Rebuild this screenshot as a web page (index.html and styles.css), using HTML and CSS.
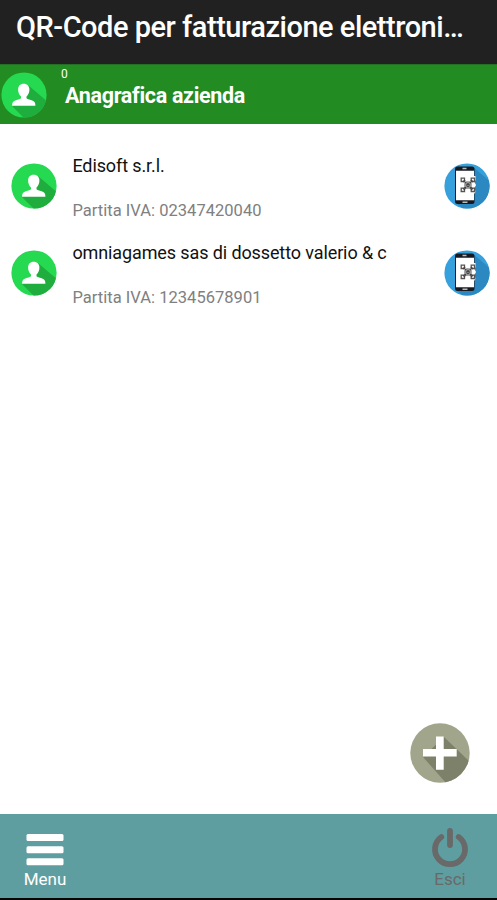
FILE: index.html
```
<!DOCTYPE html>
<html lang="it">
<head>
<meta charset="utf-8">
<title>QR-Code per fatturazione elettronica</title>
<link rel="stylesheet" href="styles.css">
</head>
<body>
<svg class="defs" width="0" height="0" aria-hidden="true">
  <defs>
    <clipPath id="disc"><circle cx="23" cy="23" r="22.6"/></clipPath>
    <symbol id="person" viewBox="0 0 46 46">
      <circle cx="23" cy="23" r="22.6" fill="#25d950"/>
      <path clip-path="url(#disc)" fill="#1fae3e" d="M27 13 L48 31 V48 H25 L11 34 L22 28Z"/>
      <path fill="#fff" d="M22.700 11.800c-3.600 0-5.600 2.300-5.600 5.700 0 3.200 1.200 5.500 2.900 6.900v1.900c-1 1.100-3.800 1.500-6.300 2.500-1.900.8-2.600 2.100-2.600 4.900h23.300c0-2.800-.7-4.100-2.600-4.900-2.500-1-5.300-1.400-6.300-2.500v-1.900c1.700-1.400 2.900-3.700 2.900-6.900 0-3.400-2.100-5.700-5.700-5.700z"/>
    </symbol>
    <symbol id="phone" viewBox="0 0 46 46">
      <circle cx="23" cy="23" r="22.6" fill="#35a0dc"/>
      <path clip-path="url(#disc)" fill="#2c88c0" d="M29 4 L48 20 V48 H22 L12 40Z"/>
      <rect x="11" y="3.500" width="19.500" height="37.500" rx="2.500" fill="#161a20"/>
      <path fill="#fff" d="M12 7.800H30V13H31.500V17L30.500 19L32 22L30.500 25L31.500 29L30 31V37.200H12Z"/>
      <path stroke="#bbb" stroke-width="1.500" d="M18.500 5.500h4M18.500 39.200h5"/>
      <g fill="none" stroke="#555">
        <path stroke-width="1.300" d="M17.200 15.200h3.300v3.300h-3.300zM27.200 15.200h3.300v3.300h-3.300zM17.200 25.200h3.300v3.300h-3.300zM27.200 25.200h3.300v3.300h-3.300z"/>
        <path stroke="#444" stroke-width="2.800" stroke-dasharray="1.600 .7" d="M19.500 17.500l9 9M28.500 17.500l-9 9"/>
        <path stroke="#888" stroke-width="1.200" d="M24 18.600l3.400 3.400-3.400 3.400-3.400-3.400z"/>
      </g>
    </symbol>
  </defs>
</svg>
<div class="app">
  <header class="titlebar"><h1>QR-Code per fatturazione elettroni…</h1></header>
  <section class="section-head">
    <svg class="icon"><use href="#person"/></svg>
    <div class="section-text">
      <span class="count">0</span>
      <h2>Anagrafica azienda</h2>
    </div>
  </section>
  <main class="list">
    <article class="row">
      <svg class="icon"><use href="#person"/></svg>
      <div class="info">
        <p class="name">Edisoft s.r.l.</p>
        <p class="vat">Partita IVA: 02347420040</p>
      </div>
      <svg class="icon"><use href="#phone"/></svg>
    </article>
    <article class="row">
      <svg class="icon"><use href="#person"/></svg>
      <div class="info">
        <p class="name">omniagames sas di dossetto valerio &amp; c</p>
        <p class="vat">Partita IVA: 12345678901</p>
      </div>
      <svg class="icon"><use href="#phone"/></svg>
    </article>
  </main>
  <button class="add" aria-label="Aggiungi">
    <svg viewBox="0 0 60 60" width="60" height="60">
      <clipPath id="addDisc"><circle cx="30" cy="30" r="29.700"/></clipPath>
      <circle cx="30" cy="30" r="29.700" fill="#a0a58b"/>
      <path clip-path="url(#addDisc)" fill="#7e8169" d="M34 14 L62 41 V60 H36 L13 34Z"/>
      <path fill="#fff" d="M26 13.500h7.700v12.500h13v7.600h-13v13.200H26V33.600H13V26h13z"/>
    </svg>
  </button>
  <footer class="toolbar">
    <div class="tool">
      <svg width="38" height="40" viewBox="0 0 38 40" fill="#fff">
        <rect x=".5" y="6" width="37" height="7" rx="1.500"/>
        <rect x=".5" y="18.200" width="37" height="7" rx="1.500"/>
        <rect x=".5" y="30.300" width="37" height="7" rx="1.500"/>
      </svg>
      <span>Menu</span>
    </div>
    <div class="tool disabled">
      <svg width="38" height="40" viewBox="0 0 38 40" fill="none" stroke="#696969" stroke-width="5.800" stroke-linecap="round">
        <path d="M10.300 9a15 15 0 1 0 17.400 0M19 3v14"/>
      </svg>
      <span>Esci</span>
    </div>
  </footer>
</div>
</body>
</html>
```
FILE: styles.css
```
* { box-sizing: border-box; margin: 0; padding: 0; }
body { font-family: Roboto, "Liberation Sans", sans-serif; background: #fff; }
.defs { display: block; }
.app { height: 900px; display: flex; flex-direction: column; overflow: hidden; border-bottom: 2px solid #050505; }
.titlebar { height: 64px; flex: none; padding: 9px 16px 0; background: #212121; color: #fff; }
h1 { font-size: 29px; line-height: 36px; font-weight: 500; letter-spacing: -0.48px; white-space: nowrap; }
.section-head { height: 60px; flex: none; display: flex; padding: 7px 0 0 1px; background: #228b22; color: #fff; border-top: 1px solid #227022; }
.icon { width: 46px; height: 46px; flex: none; }
.section-text { display: flex; flex-direction: column; margin: -5px 0 0 14px; }
.count { font-size: 12px; line-height: 14px; }
h2 { font-size: 21.5px; line-height: 26px; font-weight: 700; letter-spacing: -0.32px; margin: 2px 0 0 4px; white-space: nowrap; }
.list { flex: 1; padding: 29.4px 7px 0 11.4px; }
.row { display: flex; align-items: flex-start; height: 87px; padding-top: 10px; }
.info { flex: 1; margin: -9px 0 0 15px; white-space: nowrap; }
.name { font-size: 18px; line-height: 24px; letter-spacing: -0.11px; color: #111; }
.vat { font-size: 16.5px; line-height: 22px; margin-top: 22px; letter-spacing: 0.03px; color: #808080; }
.add { align-self: flex-end; width: 60px; height: 60px; flex: none; margin: 0 27px 31px 0; border: 0; background: none; }
.add svg { display: block; }
.toolbar { height: 84px; flex: none; display: flex; justify-content: space-between; padding: 14px 23px 0 21px; background: #5f9ea0; color: #fff; }
.tool { width: 48px; display: flex; flex-direction: column; align-items: center; font-size: 17px; line-height: 22px; }
.disabled { color: #696969; }
```
